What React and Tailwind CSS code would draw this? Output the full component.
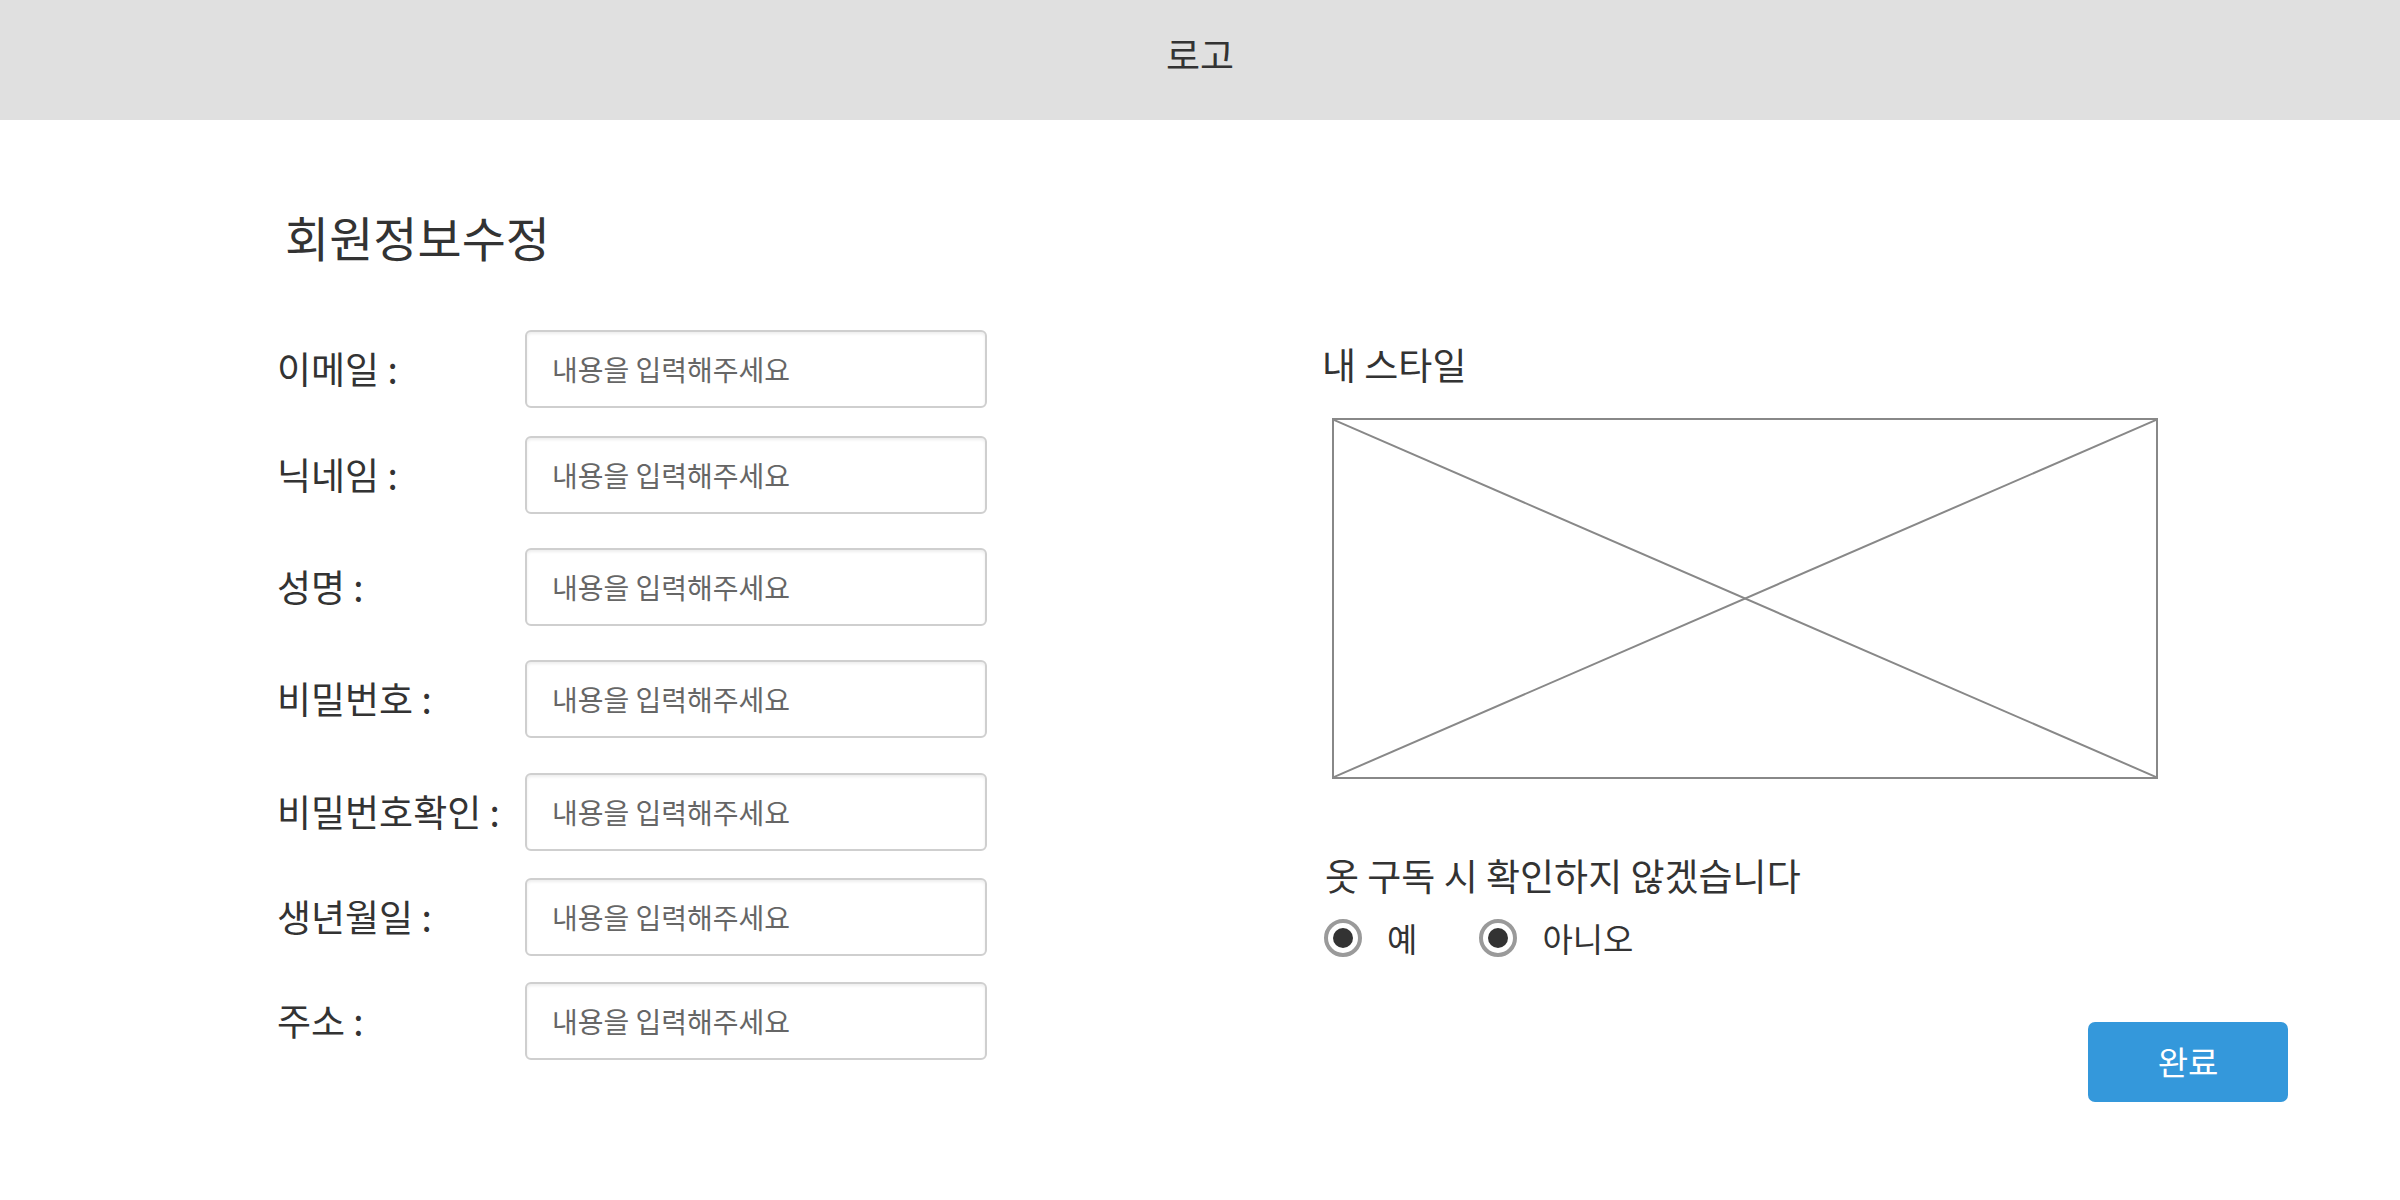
import React from "react";

const FONT = { fontFamily: '"Noto Sans CJK KR", "Noto Sans", sans-serif' };

const rows = [
  { label: "이메일 :", mt: "mt-[64px]" },
  { label: "닉네임 :", mt: "mt-[28px]" },
  { label: "성명 :", mt: "mt-[34px]" },
  { label: "비밀번호 :", mt: "mt-[34px]" },
  { label: "비밀번호확인 :", mt: "mt-[35px]" },
  { label: "생년월일 :", mt: "mt-[27px]" },
  { label: "주소 :", mt: "mt-[26px]" },
];

function Radio({ label }) {
  return (
    <label className="flex items-center gap-[25px] cursor-pointer">
      <span className="w-[38px] h-[38px] rounded-full border-[4px] border-[#9a9a9a] bg-white flex items-center justify-center">
        <span className="w-[20px] h-[20px] rounded-full bg-[#333]" />
      </span>
      <span className="text-[33px] leading-[48px] text-[#333]">{label}</span>
    </label>
  );
}

export default function App() {
  return (
    <div className="w-[2400px] h-[1200px] bg-white" style={FONT}>
      {/* ── Header ── */}
      <header className="h-[120px] bg-[#e0e0e0] flex items-center justify-center pb-[10px]">
        <span className="text-[37px] text-[#333]">로고</span>
      </header>

      <main className="flex pl-[277px]">
        {/* ── Left: form ── */}
        <div className="w-[1045px] flex flex-col">
          <h1 className="mt-[86px] ml-[8px] text-[48px] leading-[60px] text-[#333]">
            회원정보수정
          </h1>
          {rows.map((r) => (
            <div key={r.label} className={"flex items-center " + r.mt}>
              <span className="w-[248px] text-[37px] leading-[48px] text-[#333] pb-[2px]">
                {r.label}
              </span>
              <input
                type="text"
                placeholder="내용을 입력해주세요"
                className="w-[462px] h-[78px] border-2 border-[#cfcfcf] rounded-[6px] pl-[25px] text-[28px] text-[#333] placeholder:text-[#666] shadow-[inset_0_2px_3px_rgba(0,0,0,0.07)] outline-none"
                style={FONT}
              />
            </div>
          ))}
        </div>

        {/* ── Right: style ── */}
        <div className="w-[966px] flex flex-col">
          <p className="mt-[220px] text-[37px] leading-[48px] text-[#333]">내 스타일</p>
          <div className="mt-[30px] ml-[10px] w-[826px] h-[361px] border-2 border-[#888]">
            <svg className="w-full h-full block" viewBox="0 0 822 357" preserveAspectRatio="none">
              <line x1="0" y1="0" x2="822" y2="357" stroke="#888" strokeWidth="2" />
              <line x1="822" y1="0" x2="0" y2="357" stroke="#888" strokeWidth="2" />
            </svg>
          </div>
          <p className="mt-[72px] ml-[3px] text-[37px] leading-[48px] text-[#333]">
            옷 구독 시 확인하지 않겠습니다
          </p>
          <div className="mt-[15px] ml-[2px] flex items-center gap-[62px]">
            <Radio label="예" />
            <Radio label="아니오" />
          </div>
          <button className="self-end mt-[60px] w-[200px] h-[80px] rounded-[7px] bg-[#3498db] text-white text-[33px]" style={FONT}>
            완료
          </button>
        </div>
      </main>
    </div>
  );
}
